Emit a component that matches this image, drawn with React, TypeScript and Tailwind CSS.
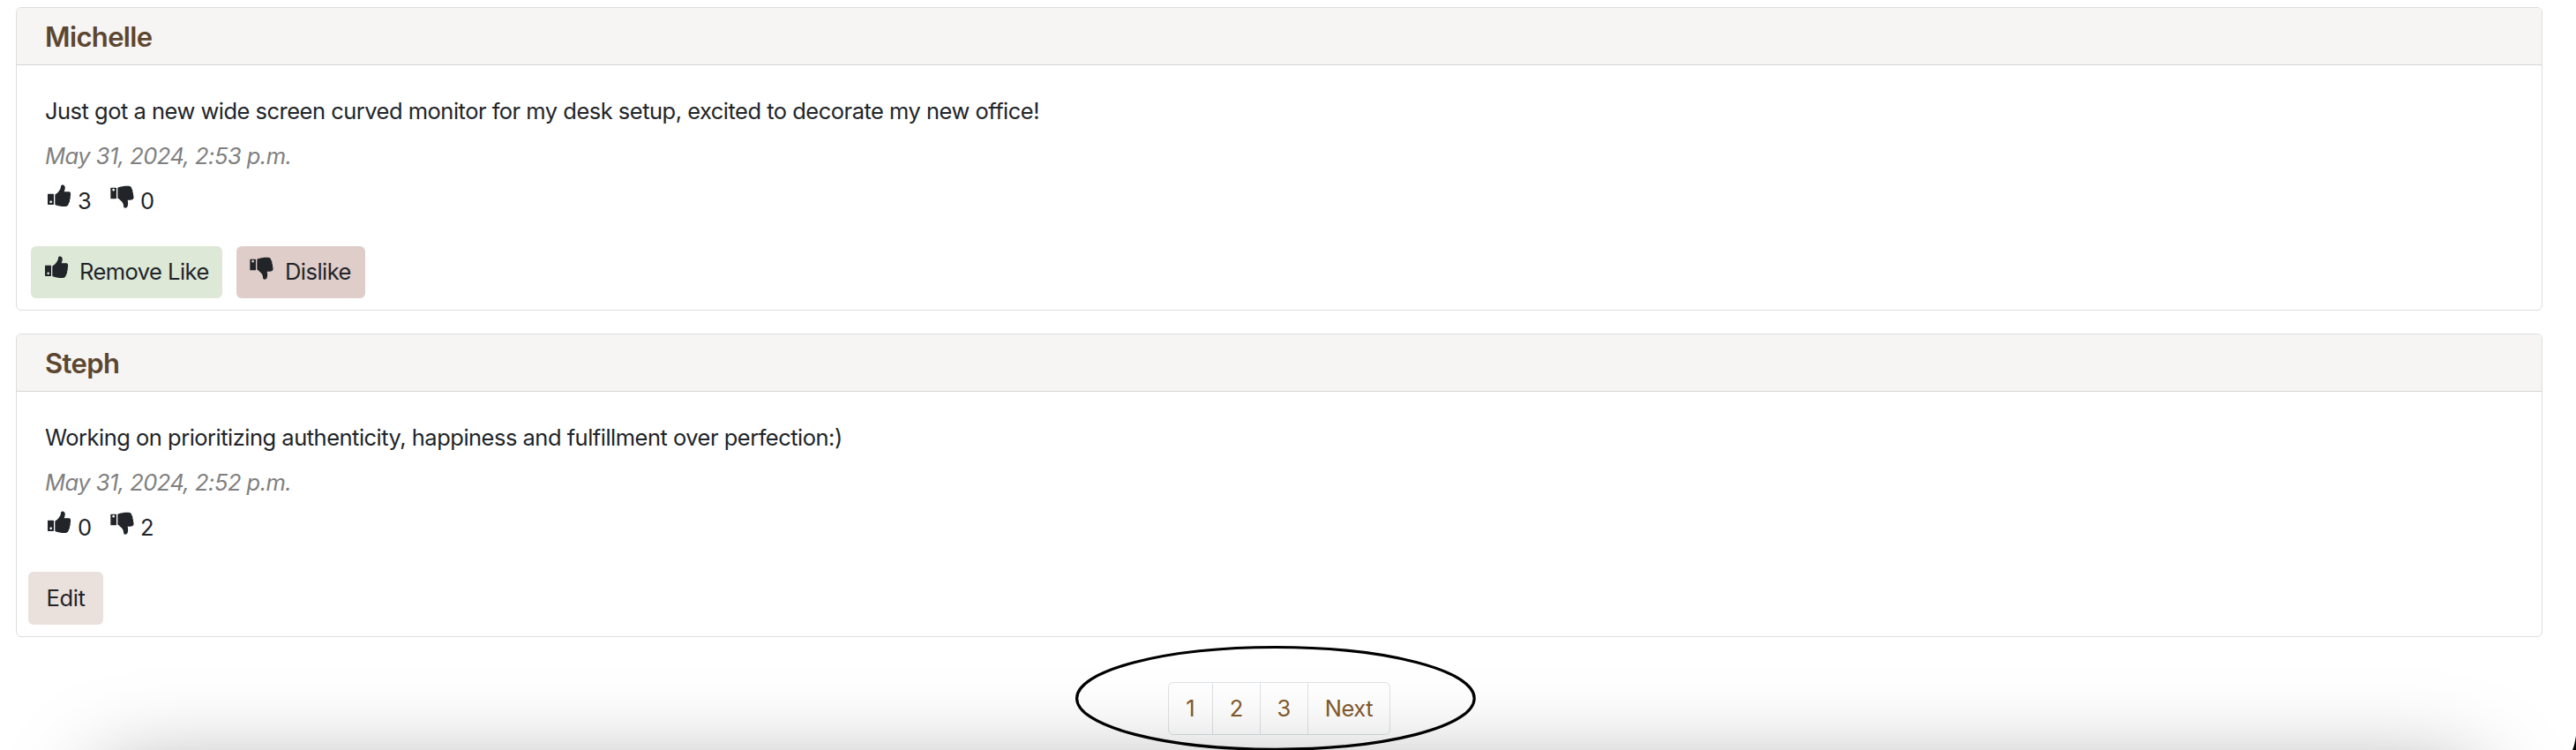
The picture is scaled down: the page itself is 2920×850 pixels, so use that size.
import React from "react";

function ThumbUp() {
  return (
    <svg viewBox="42 57 81 78" className="h-[26px] w-[27px] shrink-0" fill="currentColor" aria-hidden="true">
      <path
        fillRule="evenodd"
        d="M44 89H61Q63 89 63 91V124Q63 126 61 126H44Q42 126 42 124V91Q42 89 44 89ZM53 112.500A4 4 0 1 0 53 120.500A4 4 0 1 0 53 112.500Z"
      />
      <path d="M67 91.500C74 88 78 83 82 77C86 72 87 68 87 63C88 59 92 57.500 96 59C101 61 102 66 101 72C100 76 99 79 98 82H114C119 82 121 86 120 90C121 93 120 96 119 99C120 103 119 107 117 110C118 114 116 118 114 121C113 127 110 131 104 132C92 133 80 131 67 126Z" />
    </svg>
  );
}

function ThumbDown() {
  return (
    <svg viewBox="256 61 81 78" className="h-[26px] w-[27px] shrink-0" fill="currentColor" aria-hidden="true">
      <path
        fillRule="evenodd"
        d="M259 69H275Q277 69 277 71V105Q277 107 275 107H259Q257 107 257 105V71Q257 69 259 69ZM267 72.500A4 4 0 1 0 267 80.500A4 4 0 1 0 267 72.500Z"
      />
      <path d="M281 69C293 65 306 63 318 63.500C325 64 329 68 329 73C332 76 333 80 332 84C334 87 335 91 334 95C336 98 336 103 335 106C333 110 329 111 324 111H315C316 116 317 122 316 128C315 134 313 138 308 138C302 138 301 134 301 129C300 122 296 117 291 113C288 109 285 106 281 105Z" />
    </svg>
  );
}

interface PostProps {
  author: string;
  text: string;
  date: string;
  likes: number;
  dislikes: number;
  children: React.ReactNode;
}

function Post({ author, text, date, likes, dislikes, children }: PostProps) {
  return (
    <article className="h-[344px] rounded-[6px] border border-[#dcdddd] bg-white">
      <header className="flex h-[65px] items-center rounded-t-[5px] border-b border-[#d5d5d5] bg-[#f6f5f3] px-[32px] pt-px">
        <h2 className="text-[31px] leading-[38px] font-[570] tracking-[-0.650px] text-[#5c4630]">{author}</h2>
      </header>
      <div className="px-[32px] pt-[33px]">
        <p className="text-[25.500px] leading-[38px] tracking-[-0.510px]">{text}</p>
        <p className="mt-[13px] text-[25.500px] leading-[38px] tracking-[-0.520px] text-[#808080] italic">{date}</p>
        <div className="mt-[12px] flex h-[38px] text-[25.500px] leading-[38px]">
          <span className="ml-[3px] flex w-[71px] gap-[7px]">
            <span className="pt-px"><ThumbUp /></span>
            <span className="pt-px">{likes}</span>
          </span>
          <span className="flex gap-[7px]">
            <span className="pt-[2px]"><ThumbDown /></span>
            <span className="pt-px">{dislikes}</span>
          </span>
        </div>
      </div>
      {children}
    </article>
  );
}

const pages = ["1", "2", "3", "Next"];

export default function App() {
  return (
    <main className="relative h-[850px] w-[2920px] overflow-hidden bg-white pt-[8px] pr-[38px] pl-[18px] font-[Inter,sans-serif] text-[#212529]">
      <div className="flex flex-col gap-[26px]">
        <Post
          author="Michelle"
          text="Just got a new wide screen curved monitor for my desk setup, excited to decorate my new office!"
          date="May 31, 2024, 2:53 p.m."
          likes={3}
          dislikes={0}
        >
          <div className="mt-[33px] ml-[16px] flex gap-[16px] text-[25.500px] leading-[38px] tracking-[-0.550px]">
            <button className="flex h-[59px] w-[217px] rounded-[6px] bg-[#dde8d7] pt-[10px] pl-[16px]">
              <span className="pt-px"><ThumbUp /></span>
              <span className="ml-[12px] whitespace-nowrap">Remove Like</span>
            </button>
            <button className="flex h-[59px] w-[146px] rounded-[6px] bg-[#dfcdc9] pt-[10px] pl-[15px]">
              <span className="pt-[2px]"><ThumbDown /></span>
              <span className="ml-[13px]">Dislike</span>
            </button>
          </div>
        </Post>
        <Post
          author="Steph"
          text="Working on prioritizing authenticity, happiness and fulfillment over perfection:)"
          date="May 31, 2024, 2:52 p.m."
          likes={0}
          dislikes={2}
        >
          <button className="mt-[32px] ml-[13px] flex h-[60px] w-[85px] items-center justify-center rounded-[6px] bg-[#ebe1dc] text-[25.500px] leading-[38px] tracking-[-0.350px]">
            Edit
          </button>
        </Post>
      </div>
      <nav className="mt-[51px] ml-[1306px] flex h-[60px] w-[252px] rounded-[6px] border border-[#dee2e6] text-[25.500px] leading-[38px] text-[#845a2e]">
        {pages.map((page) => (
          <a
            key={page}
            className="flex w-[54px] items-center justify-center border-r border-[#dee2e6] first:w-[50px] last:w-[92px] last:border-r-0 last:tracking-[-0.500px]"
          >
            {page}
          </a>
        ))}
      </nav>
      <div className="pointer-events-none absolute top-[880px] left-[115px] h-[400px] w-[2690px] shadow-[0_0_100px_rgba(0,0,0,0.4)]" />
      <svg className="pointer-events-none absolute top-[725px] left-[1210px] h-[125px] w-[475px]" viewBox="0 0 475 125" fill="none">
        <ellipse cx="235.900" cy="66.400" rx="225.300" ry="57.900" stroke="#000" strokeWidth="3.200" />
      </svg>
      <svg className="pointer-events-none absolute right-0 bottom-0 h-[18px] w-[6px]" viewBox="0 0 6 18">
        <path d="M6 2C5 8 4 13 2 18H6Z" fill="#000" />
      </svg>
    </main>
  );
}
